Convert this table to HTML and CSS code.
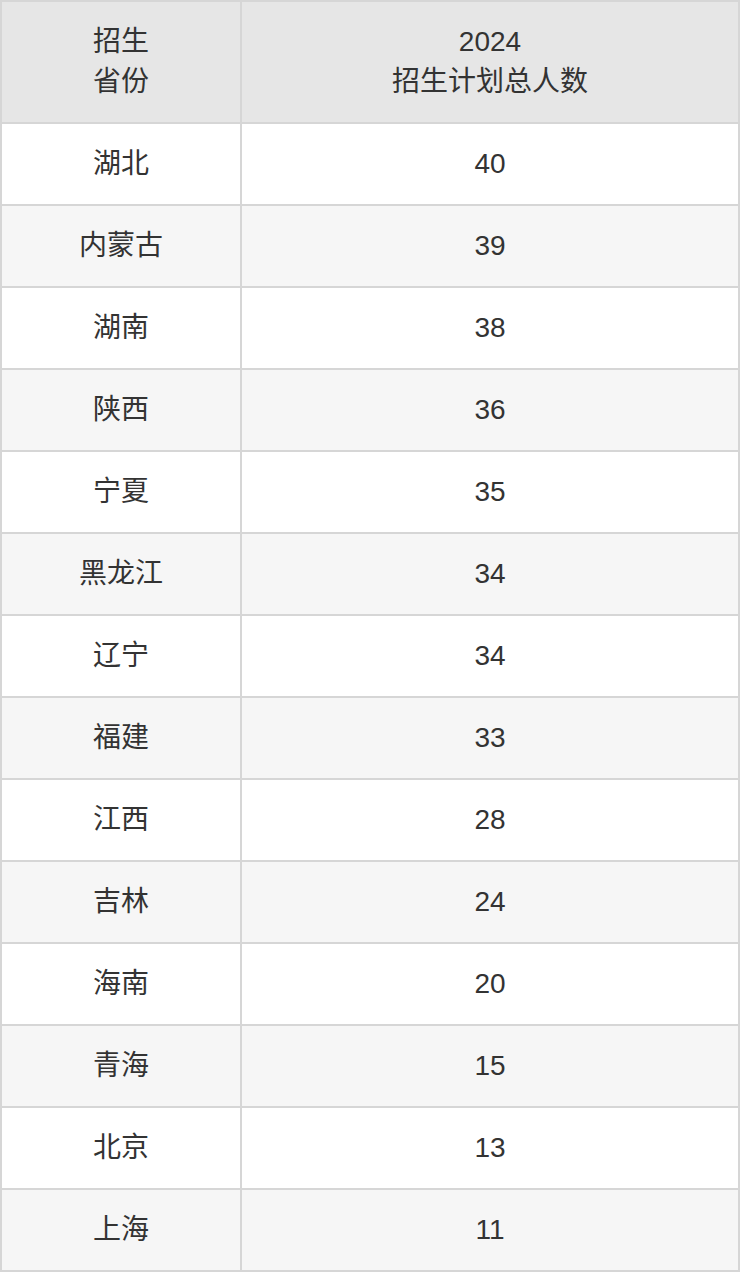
FILE: index.html
```html
<!DOCTYPE html>
<html lang="zh-CN">
<head>
<meta charset="utf-8">
<title>招生计划</title>
<link rel="stylesheet" href="styles.css">
</head>
<body>
<table class="plan">
  <thead>
    <tr><th class="col-prov">招生<br>省份</th><th class="col-num">2024<br>招生计划总人数</th></tr>
  </thead>
  <tbody>
    <tr><td>湖北</td><td>40</td></tr>
    <tr><td>内蒙古</td><td>39</td></tr>
    <tr><td>湖南</td><td>38</td></tr>
    <tr><td>陕西</td><td>36</td></tr>
    <tr><td>宁夏</td><td>35</td></tr>
    <tr><td>黑龙江</td><td>34</td></tr>
    <tr><td>辽宁</td><td>34</td></tr>
    <tr><td>福建</td><td>33</td></tr>
    <tr><td>江西</td><td>28</td></tr>
    <tr><td>吉林</td><td>24</td></tr>
    <tr><td>海南</td><td>20</td></tr>
    <tr><td>青海</td><td>15</td></tr>
    <tr><td>北京</td><td>13</td></tr>
    <tr><td>上海</td><td>11</td></tr>
  </tbody>
</table>
</body>
</html>
```

FILE: styles.css
```css
html, body {
  margin: 0;
  padding: 0;
  background: #ffffff;
}
.plan {
  width: 740px;
  border-collapse: collapse;
  table-layout: fixed;
  font-family: "Liberation Sans", "Noto Sans CJK SC", sans-serif;
  font-size: 28px;
  color: #333333;
}
.plan th,
.plan td {
  border: 2px solid #d6d6d6;
  text-align: center;
  vertical-align: middle;
  padding: 0;
  font-weight: normal;
}
.plan .col-prov {
  width: 238px;
}
.plan th {
  background: #e6e6e6;
  height: 120px;
  line-height: 40px;
}
.plan td {
  height: 80px;
  line-height: 40px;
}
.plan tbody tr:nth-child(even) td {
  background: #f6f6f6;
}
```
